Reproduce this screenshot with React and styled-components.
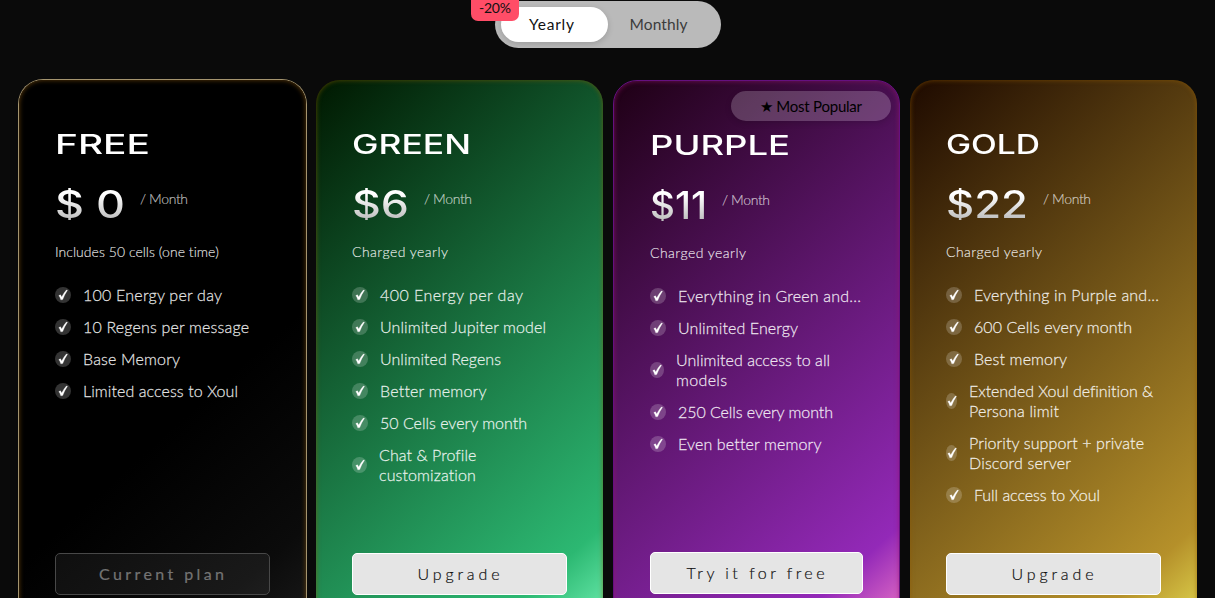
import { useLayoutEffect, useRef, useState } from 'react';
import styled, { createGlobalStyle, css } from 'styled-components';

const GlobalStyle = createGlobalStyle`
  * {
    box-sizing: border-box;
  }

  body {
    margin: 0;
    background: #0a0a0a;
    overflow: hidden;
    font-family: Lato, 'Open Sans', sans-serif;
  }
`;

const Page = styled.main`
  height: 598px;
  padding: 1px 18px 0 19px;
  overflow: hidden;
`;

// Billing switch
const Toggle = styled.div`
  position: relative;
  display: flex;
  width: 226px;
  height: 47px;
  margin: 0 auto 32px 476px;
  padding: 6px;
  border-radius: 24px;
  background: #bababa;
`;

const ToggleOption = styled.button`
  display: flex;
  align-items: center;
  justify-content: center;
  width: 107px;
  height: 35px;
  padding: 0 6px 1px 0;
  border: 0;
  border-radius: 18px;
  background: ${(props) => (props.$active ? '#fff' : 'transparent')};
  box-shadow: ${(props) => (props.$active ? '0 2px 6px rgba(0, 0, 0, 0.16)' : 'none')};
  color: ${(props) => (props.$active ? '#111' : '#3c3c3c')};
  font: 400 15.5px/20px Lato, sans-serif;
`;

const Discount = styled.span`
  position: absolute;
  top: -9px;
  left: -24px;
  display: flex;
  align-items: center;
  justify-content: center;
  width: 48px;
  height: 29px;
  padding-top: 2px;
  border-radius: 7px;
  background: #ff4d67;
  color: #111;
  font-size: 14px;
`;

// Cards
const Plans = styled.section`
  display: grid;
  grid-template-columns: repeat(4, 287px);
  gap: 10px;
`;

const themes = {
  free: css`
    background: linear-gradient(138deg, #000 0%, #000 60%, #0b0b0b 87%, #1a1a1a 100%);
    box-shadow: 0 0 0 1px #a4946f, inset 0 0 5px rgba(150, 95, 15, 0.65);
  `,
  green: css`
    background: linear-gradient(138deg, #001800 0%, #2cb872 87%, #72f2b4 100%);
    box-shadow: inset 0 0 5px rgba(125, 95, 0, 0.7);
  `,
  purple: css`
    border: 1px solid #651080;
    background: linear-gradient(138deg, #1e0014 0%, #9329b8 87%, #f27ac8 100%) border-box;
    box-shadow: inset 0 0 5px rgba(150, 20, 110, 0.7);
  `,
  gold: css`
    background: linear-gradient(138deg, #1e0a00 0%, #b5902a 87%, #e4dc52 100%);
    box-shadow: inset 0 0 5px rgba(145, 90, 0, 0.7);
  `,
};

const Card = styled.article`
  position: relative;
  display: flex;
  flex-direction: column;
  height: 551px;
  padding: 36px;
  border-radius: 24px;
  ${(props) => themes[props.$theme]}
`;

const Popular = styled.div`
  position: absolute;
  top: 10px;
  right: 8px;
  display: flex;
  align-items: center;
  justify-content: center;
  width: 160px;
  height: 30px;
  border-radius: 15px;
  background: rgba(255, 255, 255, 0.2);
  box-shadow: 0 2px 6px rgba(0, 0, 0, 0.15);
  color: #000;
  font-size: 15px;
`;

const Title = styled.h2`
  height: 28px;
  margin: 15px 0 0;
  color: #fff;
  font: 500 27px/28px Inter, sans-serif;
`;

const PriceRow = styled.div`
  display: flex;
  gap: 15px;
  height: 32px;
  margin-top: 29px;
`;

const Price = styled.div`
  font: 500 38px/32px Inter, sans-serif;

  & span span {
    background: linear-gradient(180deg, #fff 20%, #bdbdbd 100%);
    background-clip: text;
    color: transparent;
  }
`;

const Period = styled.div`
  color: rgba(255, 255, 255, 0.64);
  font-size: 14px;
  font-weight: 300;
  line-height: 22px;
  -webkit-text-stroke: 0.2px currentColor;
`;

const Billing = styled.div`
  height: 20px;
  margin-top: 22px;
  color: rgba(255, 255, 255, 0.8);
  font-size: 14px;
  font-weight: 300;
  line-height: 20px;
  -webkit-text-stroke: 0.2px currentColor;
`;

const Features = styled.ul`
  display: flex;
  flex-direction: column;
  gap: 12px;
  margin: 23px 0 0;
  padding: 0;
  list-style: none;
`;

const Feature = styled.li`
  display: flex;
  align-items: center;
  gap: 12px;
  color: rgba(255, 255, 255, 0.8);
  font-size: 16px;
  font-weight: 300;
  line-height: 20px;
  white-space: nowrap;
  -webkit-text-stroke: 0.3px currentColor;
`;

const CheckMark = styled.span`
  display: flex;
  align-items: center;
  justify-content: center;
  width: ${(props) => props.$width}px;
  height: 16px;
  border-radius: 50%;
  background: rgba(255, 255, 255, 0.2);
`;

const Lines = styled.div`
  display: flex;
  flex-direction: column;
`;

const Action = styled.button`
  flex: none;
  height: 42px;
  margin-top: auto;
  padding: 0 2px 0 0;
  border: 1px solid ${(props) => (props.$current ? '#484848' : '#fff')};
  border-radius: 5px;
  background: ${(props) => (props.$current ? 'rgba(255, 255, 255, 0.06)' : '#e5e5e5')};
  color: ${(props) => (props.$current ? '#747474' : '#111')};
  font: ${(props) => (props.$current ? 400 : 300)} 16px/20px Lato, sans-serif;
  -webkit-text-stroke: 0.2px currentColor;
`;

const FitBox = styled.span`
  display: inline-block;
  text-align: left;
  white-space: pre;
`;

const FitText = styled.span`
  display: inline-block;
  transform-origin: left center;
`;

// Tracks (or stretches) a label so it fills the given width
function Fit({ width, stretch, children }) {
  const ref = useRef(null);
  const [style, setStyle] = useState({});

  useLayoutEffect(() => {
    const natural = ref.current.getBoundingClientRect().width;
    if (stretch) {
      setStyle({ transform: `scaleX(${width / natural})` });
    } else {
      setStyle({ letterSpacing: (width - natural) / (children.length - 1) });
    }
  }, []);

  return (
    <FitBox style={{ width }}>
      <FitText ref={ref} style={style}>{children}</FitText>
    </FitBox>
  );
}

function Check({ width = 16 }) {
  return (
    <CheckMark $width={width}>
      <svg width="10" height="12" viewBox="0 0 10 12">
        <path d="M0.8 6.6 L2.5 5.8 L3.7 8 Q5.8 3.8 8.4 1 L9.5 1.2 Q6.8 5 4.7 10.6 L2.8 10.8 Q2.2 8.4 0.8 6.6Z" fill="#fff" stroke="#fff" strokeWidth="0.3" />
      </svg>
    </CheckMark>
  );
}

const plans = [
  {
    theme: 'free',
    name: 'FREE',
    nameWidth: 95,
    price: '$ 0',
    priceWidth: 70,
    billing: 'Includes 50 cells (one time)',
    billingWidth: 164,
    action: 'Current plan',
    actionWidth: 125,
    current: true,
    features: [
      { lines: [['100 Energy per day', 139]] },
      { lines: [['10 Regens per message', 166]] },
      { lines: [['Base Memory', 97]] },
      { lines: [['Limited access to Xoul', 155]] },
    ],
  },
  {
    theme: 'green',
    name: 'GREEN',
    nameWidth: 119,
    price: '$6',
    priceWidth: 57,
    billing: 'Charged yearly',
    billingWidth: 96,
    action: 'Upgrade',
    actionWidth: 82,
    features: [
      { lines: [['400 Energy per day', 143]] },
      { lines: [['Unlimited Jupiter model', 166]] },
      { lines: [['Unlimited Regens', 121]] },
      { lines: [['Better memory', 106]] },
      { lines: [['50 Cells every month', 147]] },
      { check: 15, lines: [['Chat & Profile', 97], ['customization', 97]] },
    ],
  },
  {
    theme: 'purple',
    name: 'PURPLE',
    nameWidth: 140,
    price: '$11',
    priceWidth: 57,
    billing: 'Charged yearly',
    billingWidth: 96,
    action: 'Try it for free',
    actionWidth: 138,
    popular: true,
    features: [
      { lines: [['Everything in Green and...', 183]] },
      { lines: [['Unlimited Energy', 120]] },
      { check: 14, lines: [['Unlimited access to all', 154], ['models', 51]] },
      { lines: [['250 Cells every month', 155]] },
      { lines: [['Even better memory', 143]] },
    ],
  },
  {
    theme: 'gold',
    name: 'GOLD',
    nameWidth: 94,
    price: '$22',
    priceWidth: 82,
    billing: 'Charged yearly',
    billingWidth: 96,
    action: 'Upgrade',
    actionWidth: 82,
    features: [
      { lines: [['Everything in Purple and...', 185]] },
      { lines: [['600 Cells every month', 158]] },
      { lines: [['Best memory', 93]] },
      { check: 11, lines: [['Extended Xoul definition &', 184], ['Persona limit', 90]] },
      { check: 11, lines: [['Priority support + private', 175], ['Discord server', 102]] },
      { lines: [['Full access to Xoul', 126]] },
    ],
  },
];

function PlanCard({ plan }) {
  return (
    <Card $theme={plan.theme}>
      {plan.popular && (
        <Popular>
          <Fit width={102}>★ Most Popular</Fit>
        </Popular>
      )}
      <Title>
        <Fit width={plan.nameWidth} stretch>{plan.name}</Fit>
      </Title>
      <PriceRow>
        <Price>
          <Fit width={plan.priceWidth} stretch>{plan.price}</Fit>
        </Price>
        <Period>
          <Fit width={48}>/ Month</Fit>
        </Period>
      </PriceRow>
      <Billing>
        <Fit width={plan.billingWidth}>{plan.billing}</Fit>
      </Billing>
      <Features>
        {plan.features.map((feature) => (
          <Feature key={feature.lines[0][0]}>
            <Check width={feature.check} />
            <Lines>
              {feature.lines.map(([text, width]) => (
                <Fit key={text} width={width}>{text}</Fit>
              ))}
            </Lines>
          </Feature>
        ))}
      </Features>
      <Action $current={plan.current}>
        <Fit width={plan.actionWidth}>{plan.action}</Fit>
      </Action>
    </Card>
  );
}

export default function App() {
  return (
    <Page>
      <GlobalStyle />
      <Toggle>
        <ToggleOption $active>
          <Fit width={45}>Yearly</Fit>
        </ToggleOption>
        <ToggleOption>
          <Fit width={58}>Monthly</Fit>
        </ToggleOption>
        <Discount>
          <Fit width={32}>-20%</Fit>
        </Discount>
      </Toggle>
      <Plans>
        {plans.map((plan) => (
          <PlanCard key={plan.theme} plan={plan} />
        ))}
      </Plans>
    </Page>
  );
}
